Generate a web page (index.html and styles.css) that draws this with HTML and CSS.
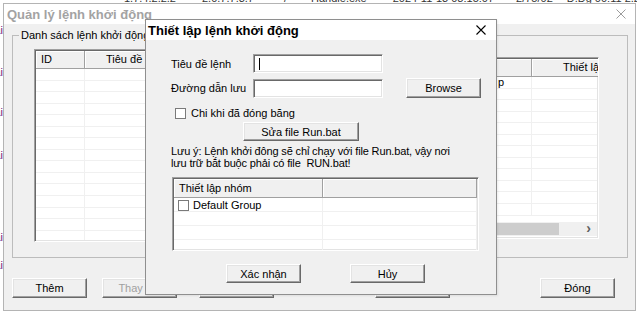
FILE: index.html
```html
<!DOCTYPE html>
<html lang="vi">
<head>
<meta charset="utf-8">
<title>Thiết lập lệnh khởi động</title>
<link rel="stylesheet" href="styles.css">
</head>
<body>
<div class="desktop">
  <div class="bg-strip">
    <span class="s1">1.7.4.2.2.2</span>
    <span class="s2">2.0.7.7.3.7</span>
    <span class="s3">/</span>
    <span class="s4">Handle.exe</span>
    <span class="s5">2024-11-13 08:15:07</span>
    <span class="s6">2/75/02</span>
    <span class="s7">Đ.Đg 00:11 2.2</span>
  </div>
  <div class="bg-left">
    <span class="m1">Tài</span>
    <span class="m2">Tài</span>
    <span class="m3">Tài</span>
    <span class="m4">Tài</span>
    <span class="m5">Tài</span>
    <span class="m6">Tài</span>
  </div>

  <div class="main-win">
    <div class="main-title">
      <span class="main-title-text">Quản lý lệnh khởi động</span>
      <svg class="close-x grey" width="10" height="10" viewBox="0 0 10 10"><path d="M0.5 0.5L9.5 9.5M9.5 0.5L0.5 9.5" stroke="currentColor" stroke-width="1"/></svg>
    </div>
    <div class="main-body">
      <fieldset class="group">
        <legend>Danh sách lệnh khởi động</legend>
        <div class="lists">
          <div class="list list-left">
            <div class="lhead cols-left">
              <div class="hcell">ID</div>
              <div class="hcell title-col">Tiêu đề</div>
              <div class="hcell center"></div>
            </div>
            <div class="lrows">
              <div class="lrow cols-left"><div></div><div></div><div></div></div>
              <div class="lrow cols-left"><div></div><div></div><div></div></div>
              <div class="lrow cols-left"><div></div><div></div><div></div></div>
              <div class="lrow cols-left"><div></div><div></div><div></div></div>
              <div class="lrow cols-left"><div></div><div></div><div></div></div>
              <div class="lrow cols-left"><div></div><div></div><div></div></div>
              <div class="lrow cols-left"><div></div><div></div><div></div></div>
              <div class="lrow cols-left"><div></div><div></div><div></div></div>
              <div class="lrow cols-left"><div></div><div></div><div></div></div>
              <div class="lrow cols-left"><div></div><div></div><div></div></div>
              <div class="lrow cols-left"><div></div><div></div><div></div></div>
              <div class="lrow cols-left"><div></div><div></div><div></div></div>
              <div class="lrow cols-left"><div></div><div></div><div></div></div>
              <div class="lrow cols-left"><div></div><div></div><div></div></div>
              <div class="lrow cols-left"><div></div><div></div><div></div></div>
              <div class="lrow cols-left"><div></div><div></div><div></div></div>
            </div>
          </div>
          <div class="list list-right">
            <div class="lhead cols-right">
              <div class="hcell center"></div>
              <div class="hcell center">Thiết lập</div>
            </div>
            <div class="lrows">
              <div class="lrow cols-right"><div class="grp">p</div><div></div></div>
              <div class="lrow cols-right"><div></div><div></div></div>
              <div class="lrow cols-right"><div></div><div></div></div>
              <div class="lrow cols-right"><div></div><div></div></div>
              <div class="lrow cols-right"><div></div><div></div></div>
              <div class="lrow cols-right"><div></div><div></div></div>
              <div class="lrow cols-right"><div></div><div></div></div>
              <div class="lrow cols-right"><div></div><div></div></div>
              <div class="lrow cols-right"><div></div><div></div></div>
              <div class="lrow cols-right"><div></div><div></div></div>
              <div class="lrow cols-right"><div></div><div></div></div>
              <div class="lrow cols-right"><div></div><div></div></div>
            </div>
            <div class="hscroll">
              <div class="sb-arrow"></div>
              <div class="sb-thumb"></div>
              <div class="sb-track"></div>
              <div class="sb-arrow">&rsaquo;</div>
            </div>
          </div>
        </div>
      </fieldset>
      <div class="main-actions">
        <button class="btn b-them">Thêm</button>
        <button class="btn b-thay" disabled>Thay đổi</button>
        <button class="btn b-xoa"></button>
        <button class="btn b-chay"></button>
        <button class="btn b-dong">Đóng</button>
      </div>
    </div>
  </div>

  <div class="dialog">
    <div class="dlg-title">
      <span class="dlg-title-text">Thiết lập lệnh khởi động</span>
      <svg class="close-x" width="10" height="10" viewBox="0 0 10 10"><path d="M0.5 0.5L9.5 9.5M9.5 0.5L0.5 9.5" stroke="currentColor" stroke-width="1.1"/></svg>
    </div>
    <div class="dlg-body">
      <div class="form-row r1">
        <label class="lbl">Tiêu đề lệnh</label>
        <div class="input"><span class="caret"></span></div>
      </div>
      <div class="form-row r2">
        <label class="lbl">Đường dẫn lưu</label>
        <div class="input"></div>
        <button class="btn browse">Browse</button>
      </div>
      <div class="check-row">
        <span class="chk"></span>
        <span>Chi khi đã đóng băng</span>
      </div>
      <button class="btn edit">Sửa file Run.bat</button>
      <p class="note">Lưu ý: Lệnh khởi đông sẽ chỉ chạy với file Run.bat, vậy nơi<br>lưu trữ bắt buộc phải có file&nbsp; RUN.bat!</p>
      <div class="glist">
        <div class="ghead">
          <div class="hcell">Thiết lập nhóm</div>
          <div class="hcell"></div>
        </div>
        <div class="grow first"><div class="gcell"><span class="chk"></span><span>Default Group</span></div><div class="gcell"></div></div>
        <div class="grow"><div class="gcell"></div><div class="gcell"></div></div>
        <div class="grow"><div class="gcell"></div><div class="gcell"></div></div>
        <div class="grow"><div class="gcell"></div><div class="gcell"></div></div>
      </div>
      <div class="dlg-actions">
        <button class="btn ok">Xác nhận</button>
        <button class="btn cancel">Hủy</button>
      </div>
    </div>
  </div>
</div>
</body>
</html>
```

FILE: styles.css
```css
* { box-sizing: border-box; }
html, body { margin: 0; padding: 0; }
body {
  width: 637px;
  height: 312px;
  overflow: hidden;
  background: #ffffff;
  font-family: "Liberation Sans", Arial, sans-serif;
  font-size: 11px;
  color: #000;
}
.desktop { position: relative; width: 637px; height: 312px; overflow: hidden; }

/* background application fragments */
.bg-strip {
  position: absolute;
  left: 0;
  top: -8px;
  display: flex;
  font-size: 11px;
  line-height: 12px;
  color: #333;
  white-space: nowrap;
}
.bg-strip .s1 { margin-left: 124px; }
.bg-strip .s2 { margin-left: 26px; }
.bg-strip .s3 { margin-left: 30px; }
.bg-strip .s4 { margin-left: 24px; }
.bg-strip .s5 { margin-left: 26px; }
.bg-strip .s6 { margin-left: 22px; }
.bg-strip .s7 { margin-left: 14px; }

.bg-left {
  position: absolute;
  right: 634px;
  top: 0;
  display: flex;
  flex-direction: column;
  align-items: flex-end;
  color: #7a1a7a;
  font-size: 11px;
  line-height: 12px;
}
.bg-left .m1 { margin-top: 24px; }
.bg-left .m2 { margin-top: 30px; }
.bg-left .m3 { margin-top: 28px; }
.bg-left .m4 { margin-top: 31px; }
.bg-left .m5 { margin-top: 70px; }
.bg-left .m6 { margin-top: 16px; }

/* main window */
.main-win {
  position: absolute;
  left: 3px;
  top: 3px;
  width: 633px;
  height: 308px;
  border: 1px solid #b4b4b4;
  background: #f0f0f0;
  display: flex;
  flex-direction: column;
}
.main-title {
  height: 20px;
  flex: none;
  background: #ffffff;
  display: flex;
  align-items: center;
  justify-content: space-between;
  padding: 0 9px 0 3px;
}
.main-title-text {
  font-weight: bold;
  font-size: 13px;
  color: #a3a3a3;
}
.close-x { display: block; color: #000; }
.close-x.grey { color: #9c9c9c; }

.main-body { display: flex; flex-direction: column; }

.group {
  margin: 5px 0 0 8px;
  width: 616px;
  height: 229px;
  border: 1px solid #bcbcbc;
  padding: 7px 0 0 0;
  min-width: 0;
}
.group legend {
  margin-left: 6px;
  padding: 0 2px;
  font-size: 11px;
  line-height: 13px;
}

.lists {
  display: flex;
  align-items: flex-start;
  margin-left: 21px;
  gap: 10px;
}
.list {
  background: #fff;
  border: 1px solid;
  border-color: #a0a0a0 #ffffff #ffffff #a0a0a0;
  box-shadow: inset 1px 1px #696969, inset -1px -1px #e3e3e3;
  padding: 1px;
  overflow: hidden;
  display: flex;
  flex-direction: column;
}
.list-left { width: 267px; height: 193px; }
.list-right { width: 288px; height: 182px; margin-top: 8px; }

.lhead {
  display: grid;
  height: 18px;
  flex: none;
}
.cols-left { display: grid; grid-template-columns: 49px 110px 120px; }
.cols-right { display: grid; grid-template-columns: 219px 120px; }

.hcell {
  background: #f0f0f0;
  border-right: 1px solid #a0a0a0;
  border-bottom: 1px solid #a0a0a0;
  box-shadow: inset 1px 1px #ffffff;
  padding: 0 0 0 5px;
  line-height: 17px;
  white-space: nowrap;
  overflow: hidden;
}
.hcell.center { text-align: center; padding: 0; }
.hcell.title-col { padding-left: 21px; }
.list-right .hcell:last-child { text-align: left; padding-left: 31px; }

.lrows { flex: 1; overflow: hidden; }
.lrow {
  height: 11.55px;
  border-bottom: 1px solid #f0f0f0;
}
.lrow > div { border-right: 1px solid #f0f0f0; white-space: nowrap; overflow: hidden; line-height: 11px; }
.lrow .grp { padding-left: 185px; }

.hscroll {
  flex: none;
  height: 14px;
  display: flex;
  background: #f0f0f0;
  margin-bottom: 1px;
}
.sb-arrow {
  width: 17px;
  text-align: center;
  font-size: 14px;
  line-height: 13px;
  font-weight: bold;
  color: #606060;
}
.sb-thumb { width: 229px; margin: 1px 0; background: #cdcdcd; }
.sb-track { flex: 1; }

.main-actions {
  display: flex;
  margin: 20px 0 0 8px;
}
.btn {
  font-family: inherit;
  font-size: 11px;
  color: #000;
  background: #f0f0f0;
  border: 1px solid;
  border-color: #ffffff #696969 #696969 #ffffff;
  box-shadow: inset -1px -1px #a0a0a0, inset 1px 1px #e3e3e3;
  padding: 0;
  margin: 0;
  height: 20px;
  width: 75px;
}
.btn:disabled { color: #a0a0a0; }
.b-thay { margin-left: 15px; }
.b-xoa { margin-left: 22px; }
.b-chay { margin-left: 101px; }
.b-dong { margin-left: 90px; }

/* dialog */
.dialog {
  position: absolute;
  left: 145px;
  top: 19px;
  width: 352px;
  height: 276px;
  border: 1px solid #8f8f8f;
  background: #f0f0f0;
  display: flex;
  flex-direction: column;
  box-shadow: 1px 1px 2px rgba(0,0,0,0.08);
}
.dlg-title {
  height: 20px;
  flex: none;
  background: #fff;
  display: flex;
  align-items: center;
  justify-content: space-between;
  padding: 0 10px 0 2px;
}
.dlg-title-text { font-weight: bold; font-size: 13px; }

.dlg-body {
  display: flex;
  flex-direction: column;
  align-items: flex-start;
  padding-left: 25px;
}
.form-row { display: flex; align-items: center; }
.form-row.r1 { margin-top: 14px; }
.form-row.r2 { margin-top: 5px; }
.lbl { width: 82px; }
.input {
  width: 130px;
  height: 19px;
  background: #fff;
  border: 1px solid;
  border-color: #a0a0a0 #ffffff #ffffff #a0a0a0;
  box-shadow: inset 1px 1px #696969, inset -1px -1px #e3e3e3;
  padding: 3px 0 0 5px;
}
.caret { display: block; width: 1px; height: 12px; background: #000; }
.browse { margin-left: 23px; }

.check-row {
  display: flex;
  align-items: center;
  height: 11px;
  margin: 10px 0 0 4px;
  gap: 5px;
  line-height: 11px;
}
.chk {
  display: inline-block;
  width: 11px;
  height: 11px;
  background: #fff;
  border: 1px solid #7a7a7a;
  flex: none;
}
.edit { width: 116px; height: 19px; margin: 3px 0 0 72px; }

.note {
  margin: 4px 0 0 0;
  line-height: 12px;
  white-space: nowrap;
  letter-spacing: -0.15px;
}

.glist {
  margin: 8px 0 0 1px;
  width: 307px;
  height: 74px;
  background: #fff;
  border: 1px solid;
  border-color: #a0a0a0 #ffffff #ffffff #a0a0a0;
  box-shadow: inset 1px 1px #696969, inset -1px -1px #e3e3e3;
  padding: 1px;
  overflow: hidden;
}
.ghead { display: grid; grid-template-columns: 149px 1fr; height: 19px; }
.ghead .hcell { line-height: 18px; }
.grow {
  display: grid;
  grid-template-columns: 149px 1fr;
  height: 14px;
  border-bottom: 1px solid #f0f0f0;
}
.gcell { border-right: 1px solid #f0f0f0; display: flex; align-items: center; gap: 4px; padding-left: 4px; }
.grow.first .gcell { padding-top: 1px; }

.dlg-actions { display: flex; margin: 13px 0 0 55px; gap: 49px; }
.dlg-actions .btn { height: 19px; }
```
